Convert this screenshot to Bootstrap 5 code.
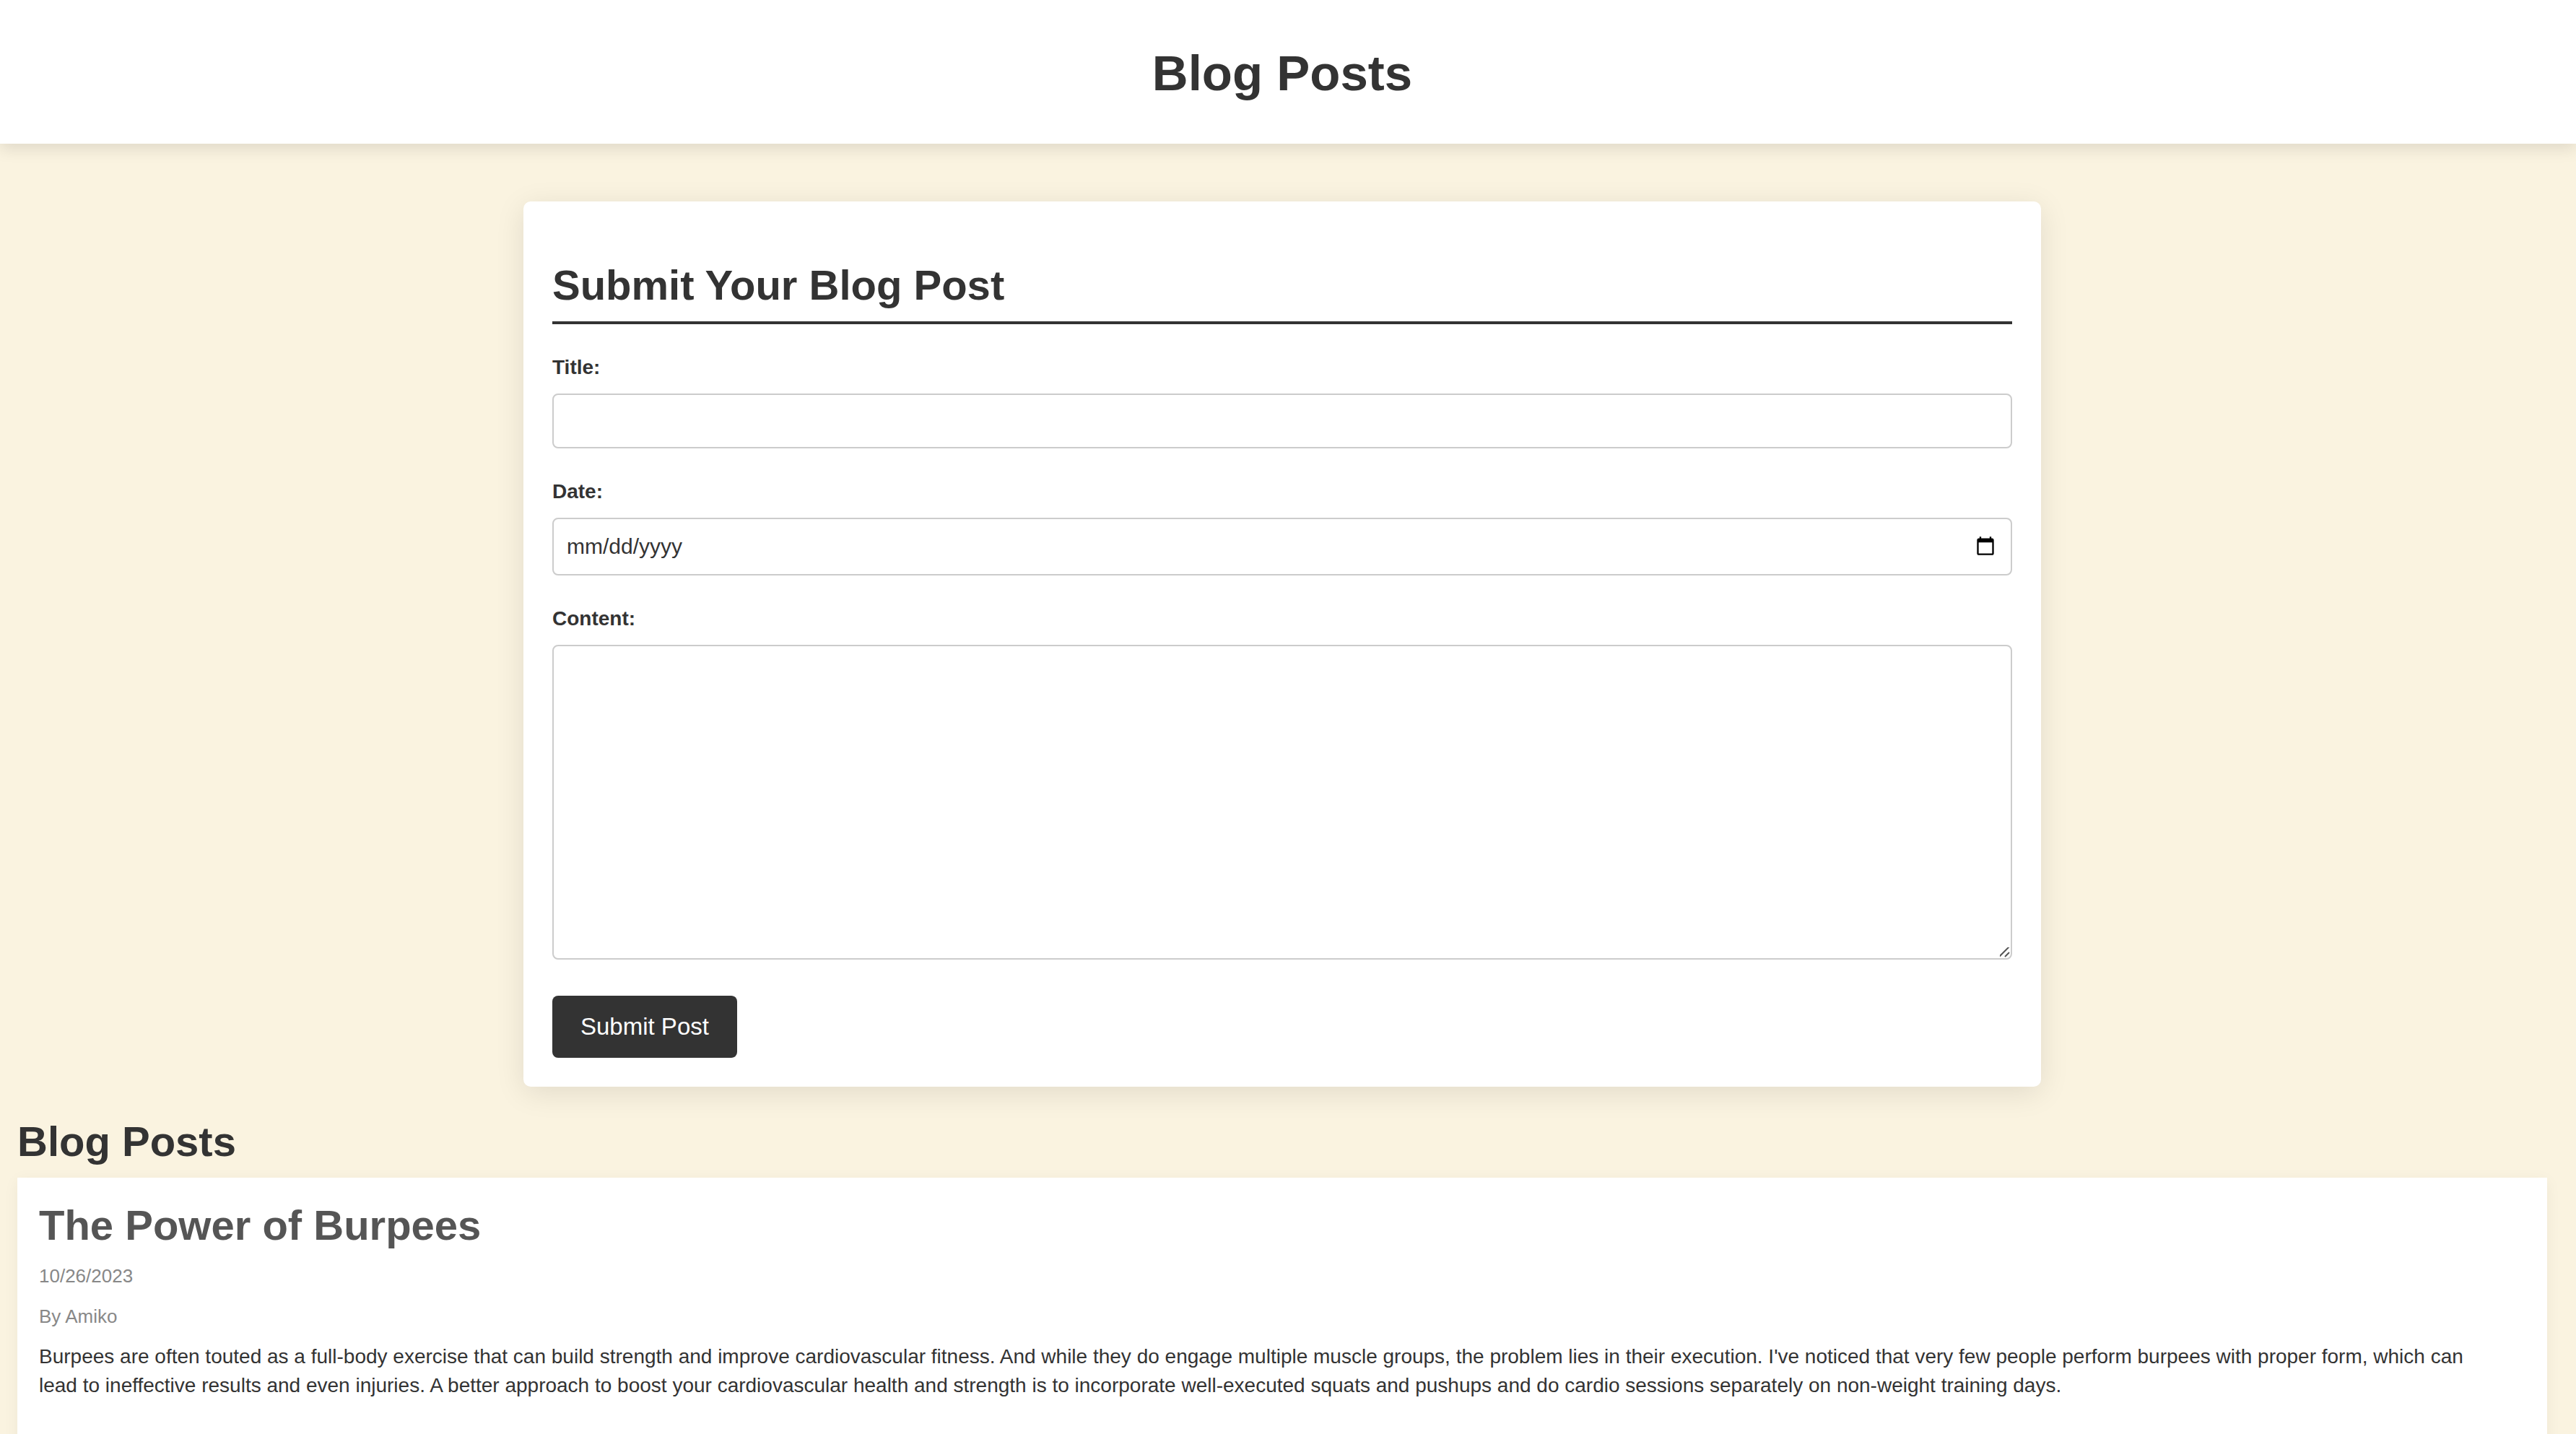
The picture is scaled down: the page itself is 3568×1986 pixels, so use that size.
<!DOCTYPE html>
<html lang="en">
<head>
<meta charset="utf-8">
<meta name="viewport" content="width=device-width, initial-scale=1">
<title>Blog Posts</title>
<link href="https://cdn.jsdelivr.net/npm/bootstrap@5.3.0/dist/css/bootstrap.min.css" rel="stylesheet">
<style>
  body {
    background-color: #faf3e0;
    color: #333;
    font-family: "Liberation Sans", Arial, sans-serif;
    font-size: 28px;
    line-height: 40px;
  }
  .page-main { padding: 80px 40px 0 24px; }
  .site-header {
    background-color: #fff;
    padding: 50px 16px 45px 0;
    box-shadow: 0 8px 20px rgba(0, 0, 0, .1);
  }
  .site-header h1 { font-size: 69px; line-height: 104px; font-weight: 700; }
  .post-form {
    max-width: 2102px;
    padding: 80px 40px 40px;
    border-radius: 10px;
    box-shadow: 0 8px 40px rgba(0, 0, 0, .1);
  }
  .section-title { font-size: 58px; line-height: 72px; font-weight: 700; margin-bottom: 14px; }
  .form-title { padding-bottom: 14px; border-bottom: 4px solid #333; margin-bottom: 40px; }
  .field-label { font-weight: 700; line-height: 40px; margin-bottom: 16px; }
  .field-box {
    border: 2px solid #ccc;
    border-radius: 8px;
    padding: 16px 18px;
    font-size: 28px;
    line-height: 40px;
    color: #333;
    height: 76px;
  }
  .field-date { height: 80px; font-size: 30px; }
  .field-content { height: 436px; min-height: 436px; }
  .field-content::-webkit-scrollbar { width: 18px; height: 18px; }
  .field-content::-webkit-resizer {
    background: url("data:image/svg+xml,%3Csvg xmlns='http://www.w3.org/2000/svg' width='18' height='18'%3E%3Cpath d='M2 16L16 2M10 16L16 10' stroke='%23555' stroke-width='2'/%3E%3C/svg%3E") no-repeat right bottom;
  }
  .field-group { margin-bottom: 40px; }
  .field-group-last { margin-bottom: 50px; }
  .btn-submit {
    background-color: #333;
    color: #fff;
    font-size: 33px;
    line-height: 46px;
    padding: 20px 39px;
    border: 0;
    border-radius: 8px;
  }
  .posts { padding-top: 40px; }
  .post-item {
    background-color: #fff;
    padding: 30px 60px 80px 30px;
    box-shadow: 0 4px 20px rgba(0, 0, 0, .05);
  }
  .post-item h3 { color: #555; }
  .post-meta { color: #888; font-size: 26px; line-height: 40px; margin-bottom: 16px; }
</style>
<script src="https://cdn.jsdelivr.net/npm/bootstrap@5.3.0/dist/js/bootstrap.bundle.min.js"></script>
</head>
<body>
<header class="site-header text-center">
  <h1 class="mb-0">Blog Posts</h1>
</header>
<main class="page-main">
  <form class="post-form bg-white mx-auto">
    <h2 class="section-title form-title">Submit Your Blog Post</h2>
    <div class="field-group">
      <label class="field-label d-block" for="title">Title:</label>
      <input class="form-control field-box" type="text" id="title">
    </div>
    <div class="field-group">
      <label class="field-label d-block" for="date">Date:</label>
      <input class="form-control field-box field-date" type="date" id="date">
    </div>
    <div class="field-group-last">
      <label class="field-label d-block" for="content">Content:</label>
      <textarea class="form-control field-box field-content" id="content"></textarea>
    </div>
    <button type="submit" class="btn btn-submit">Submit Post</button>
  </form>
  <section class="posts">
    <h2 class="section-title">Blog Posts</h2>
    <article class="post-item">
      <h3 class="section-title">The Power of Burpees</h3>
      <p class="post-meta">10/26/2023</p>
      <p class="post-meta">By Amiko</p>
      <p class="mb-0">Burpees are often touted as a full-body exercise that can build strength and improve cardiovascular fitness. And while they do engage multiple muscle groups, the problem lies in their execution. I've noticed that very few people perform burpees with proper form, which can lead to ineffective results and even injuries. A better approach to boost your cardiovascular health and strength is to incorporate well-executed squats and pushups and do cardio sessions separately on non-weight training days.</p>
    </article>
  </section>
</main>
</body>
</html>
